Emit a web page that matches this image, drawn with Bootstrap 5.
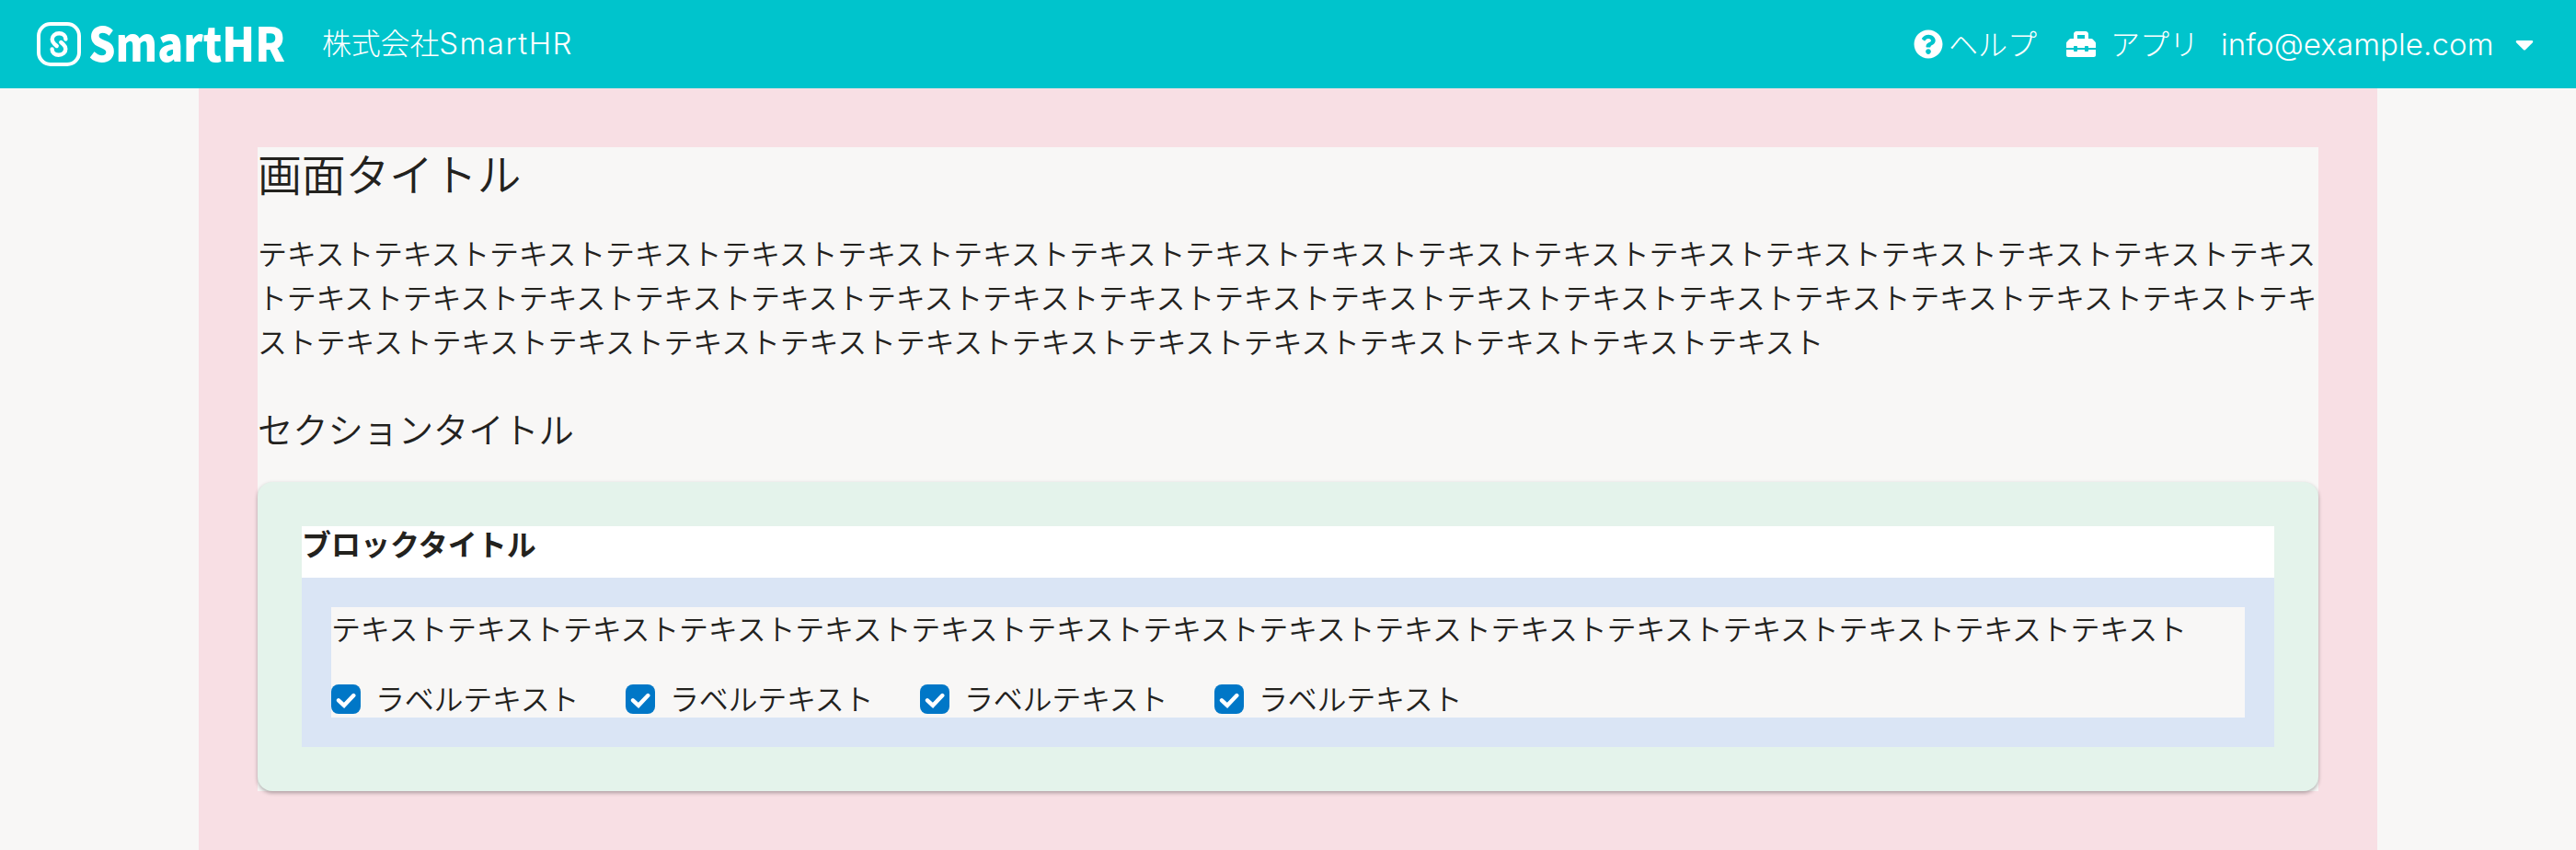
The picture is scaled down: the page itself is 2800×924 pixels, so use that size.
<!DOCTYPE html>
<html lang="ja">
<head>
<meta charset="utf-8">
<meta name="viewport" content="width=device-width, initial-scale=1">
<title>画面タイトル</title>
<link rel="stylesheet" href="https://cdn.jsdelivr.net/npm/bootstrap@5.3.0/dist/css/bootstrap.min.css">
<style>
body{background:#f8f7f6;color:#23221e;font-family:"Noto Sans CJK JP",sans-serif;font-size:32px;line-height:1.5;font-weight:350;height:924px;overflow:hidden}
.app-header{background:#00c4cc;height:96px;padding:0 46px 0 40px;color:#fff;line-height:44px;font-weight:300}
.app-header span,.company{padding-bottom:4px}
.logo{overflow:visible}
.company{margin-left:36px;letter-spacing:-.2px}
.company .latin{font-family:Inter,sans-serif;font-size:33px;letter-spacing:1.5px}
.app-header .mail{font-family:Inter,sans-serif;font-size:33px;letter-spacing:.1px;padding-bottom:1px}
.nav-help{width:166px;gap:6px}
.nav-apps{width:168px;gap:16px}
.nav-user{width:340px}
.jp{letter-spacing:-.25px}
.page-frame{width:2368px;height:828px;background:#f8dfe4;padding:64px}
.page-body{background:#f8f7f6}
h1{font-size:48px;line-height:54px;margin:0 0 30px;padding-bottom:6px;font-weight:350;letter-spacing:-.3px}
.lead-text{margin-bottom:47px}
h2{font-size:38.4px;line-height:48px;margin:0 0 35px;font-weight:350;letter-spacing:-.2px}
h3{font-size:32px;line-height:37px;margin:0;padding-bottom:19px;font-weight:700}
.panel{background:#e4f3eb;border-radius:16px;padding:48px;box-shadow:0 2px 4px rgba(3,3,2,.3)}
.block-pad{background:#dae5f5;padding:32px}
.block-body{background:#f8f7f6}
.block-text{line-height:44px;padding-bottom:4px;margin-bottom:32px}
.check-item{width:320px;height:40px}
.check-item span{line-height:36px;padding-bottom:4px}
.form-check-input.box{width:32px;height:32px;margin:0 16px 0 0;border:0;border-radius:8px;background-color:#0077c7;flex:none}
.form-check-input.box:checked{background-size:32px 32px;background-image:url("data:image/svg+xml,%3csvg xmlns='http://www.w3.org/2000/svg' viewBox='0 0 32 32'%3e%3cpath d='M8 17.3l6 5.5L24.3 12' fill='none' stroke='%23fff' stroke-width='4.4' stroke-linecap='round' stroke-linejoin='miter'/%3e%3c/svg%3e")}
</style>
</head>
<body>
<header class="app-header d-flex align-items-center">
  <svg class="logo" width="274" height="48" viewBox="0 0 274 48" role="img" aria-label="SmartHR">
    <g fill="none" stroke="#fff" stroke-width="4">
      <rect x="2" y="2" width="44" height="44" rx="13"/>
      <path id="hook" stroke-width="4.4" stroke-linecap="round" d="M31.4 18.6C31.4 14.6 28.3 12.2 24.3 12.2C20 12.2 16.7 15 16.7 18.7C16.7 21 17.7 22.4 19.3 23.9L21.7 26"/>
      <use href="#hook" transform="rotate(180 24 24)"/>
    </g>
    <text x="56" y="43" fill="#fff" font-family="Noto Sans CJK JP" font-weight="900" font-size="51" textLength="214" lengthAdjust="spacingAndGlyphs">SmartHR</text>
  </svg>
  <div class="company">株式会社<span class="latin">SmartHR</span></div>
  <div class="ms-auto d-flex align-items-center">
    <div class="nav-help d-flex align-items-center">
      <svg width="32" height="32" viewBox="0 0 512 512" fill="#fff"><path d="M504 256c0 136.997-111.043 248-248 248S8 392.997 8 256C8 119.083 119.043 8 256 8s248 111.083 248 248zM262.655 90c-54.497 0-89.255 22.957-116.549 63.758-3.536 5.286-2.353 12.415 2.715 16.258l34.699 26.31c5.205 3.947 12.621 3.008 16.665-2.122 17.864-22.658 30.113-35.797 57.303-35.797 20.429 0 45.698 13.148 45.698 32.958 0 14.976-12.363 22.667-32.534 33.976C247.128 238.528 216 254.941 216 296v4c0 6.627 5.373 12 12 12h56c6.627 0 12-5.373 12-12v-1.333c0-28.462 83.186-29.647 83.186-106.667 0-58.002-60.165-102-116.531-102zM256 338c-25.365 0-46 20.635-46 46 0 25.364 20.635 46 46 46s46-20.636 46-46c0-25.364-20.635-46-46-46z"/></svg>
      <span>ヘルプ</span>
    </div>
    <div class="nav-apps d-flex align-items-center">
      <svg width="32" height="32" viewBox="0 0 512 512" fill="#fff"><path d="M502.63 214.63l-45.25-45.25c-6-6-14.14-9.37-22.63-9.37H384V80c0-26.51-21.49-48-48-48H176c-26.51 0-48 21.49-48 48v80H77.25c-8.49 0-16.62 3.37-22.63 9.37L9.37 214.63c-6 6-9.37 14.14-9.37 22.63V320h128v-16c0-8.84 7.16-16 16-16h32c8.84 0 16 7.16 16 16v16h128v-16c0-8.84 7.16-16 16-16h32c8.84 0 16 7.16 16 16v16h128v-82.75c0-8.48-3.37-16.62-9.37-22.62zM320 160H192V96h128v64zm64 208c0 8.84-7.16 16-16 16h-32c-8.84 0-16-7.16-16-16v-16H192v16c0 8.84-7.16 16-16 16h-32c-8.84 0-16-7.16-16-16v-16H0v96c0 17.67 14.33 32 32 32h448c17.67 0 32-14.33 32-32v-96H384v16z"/></svg>
      <span>アプリ</span>
    </div>
    <div class="nav-user d-flex align-items-center justify-content-between">
      <span class="mail">info@example.com</span>
      <svg width="20" height="32" viewBox="0 0 320 512" fill="#fff"><path d="M31.3 192h257.3c17.8 0 26.7 21.5 14.1 34.1L174.1 354.8c-7.8 7.8-20.5 7.8-28.3 0L17.2 226.1C4.6 213.5 13.5 192 31.3 192z"/></svg>
    </div>
  </div>
</header>
<main class="page-frame mx-auto">
  <div class="page-body">
    <h1>画面タイトル</h1>
    <p class="jp lead-text">テキストテキストテキストテキストテキストテキストテキストテキストテキストテキストテキストテキストテキストテキストテキストテキストテキストテキストテキストテキストテキストテキストテキストテキストテキストテキストテキストテキストテキストテキストテキストテキストテキストテキストテキストテキストテキストテキストテキストテキストテキストテキストテキストテキストテキストテキストテキストテキストテキスト</p>
    <h2>セクションタイトル</h2>
    <section class="panel">
      <h3 class="bg-white">ブロックタイトル</h3>
      <div class="block-pad"><div class="block-body">
        <p class="jp block-text">テキストテキストテキストテキストテキストテキストテキストテキストテキストテキストテキストテキストテキストテキストテキストテキスト</p>
        <div class="d-flex">
          <label class="check-item d-flex align-items-center jp"><input class="form-check-input box" type="checkbox" checked><span>ラベルテキスト</span></label>
          <label class="check-item d-flex align-items-center jp"><input class="form-check-input box" type="checkbox" checked><span>ラベルテキスト</span></label>
          <label class="check-item d-flex align-items-center jp"><input class="form-check-input box" type="checkbox" checked><span>ラベルテキスト</span></label>
          <label class="check-item d-flex align-items-center jp"><input class="form-check-input box" type="checkbox" checked><span>ラベルテキスト</span></label>
        </div>
      </div></div>
    </section>
  </div>
</main>
<script src="https://cdn.jsdelivr.net/npm/bootstrap@5.3.0/dist/js/bootstrap.bundle.min.js"></script>
</body>
</html>
